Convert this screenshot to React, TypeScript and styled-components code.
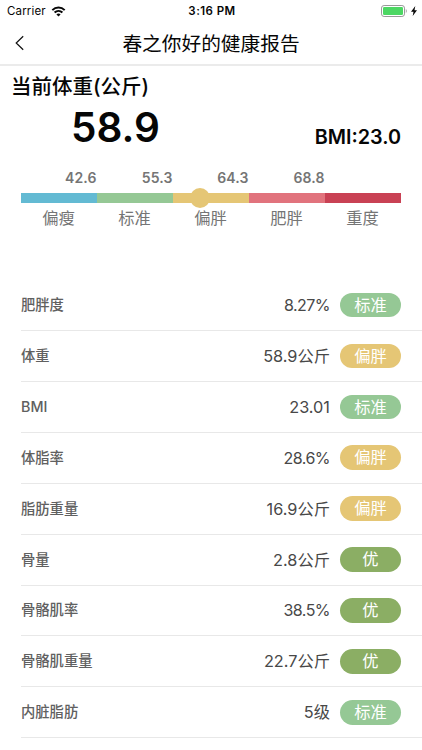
import React from 'react';
import styled, { createGlobalStyle } from 'styled-components';

const GlobalStyle = createGlobalStyle`
  * { box-sizing: border-box; }
  html, body { margin: 0; background: #fff; overflow: hidden; }
  body { font-family: Inter, "Noto Sans CJK SC", sans-serif; color: #060606; }
`;

const Screen = styled.main`
  display: flex;
  flex-direction: column;
  width: 422px;
  height: 750px;
  overflow: hidden;
  background: #fff;
`;

const StatusBar = styled.header`
  display: grid;
  grid-template-columns: 1fr auto 1fr;
  align-items: center;
  height: 22px;
  padding: 0 5px 0 7px;
  font-size: 11.5px;
  line-height: 22px;
`;

const Carrier = styled.div`
  display: flex;
  align-items: center;
  gap: 5px;
  letter-spacing: 0.15px;
`;

const Clock = styled.div`
  font-weight: 600;
  font-size: 11.5px;
  letter-spacing: 0.45px;
`;

const Power = styled.div`
  display: flex;
  justify-content: flex-end;
  align-items: center;
  gap: 4px;
`;

const NavBar = styled.nav`
  display: grid;
  grid-template-columns: 40px 1fr 40px;
  align-items: center;
  height: 44px;
  border-bottom: 2px solid #ebebeb;
`;

const BackButton = styled.button`
  display: flex;
  padding: 0 0 0 14px;
  border: 0;
  background: none;
  color: #111;
`;

const Title = styled.h1`
  margin: 0;
  padding-top: 1px;
  text-align: center;
  font-size: 19.7px;
  font-weight: 400;
  line-height: 40px;
`;

const Summary = styled.section`
  height: 100px;
  padding: 6px 21px 0 11px;
`;

const Heading = styled.h2`
  margin: 0;
  font-size: 20.5px;
  font-weight: 500;
  line-height: 30px;
`;

const Readings = styled.div`
  display: flex;
  justify-content: space-between;
  align-items: flex-end;
  height: 52px;
  padding-left: 60px;
`;

const Weight = styled.strong`
  font-size: 40.5px;
  font-weight: 600;
  line-height: 53px;
`;

const Bmi = styled.strong`
  font-size: 19.8px;
  font-weight: 600;
  line-height: 26px;
  margin-bottom: 4px;
`;

const Scale = styled.section`
  display: grid;
  grid-template-columns: repeat(5, 1fr);
  height: 114px;
  padding: 2px 21px 0;
`;

const Segment = styled.div`
  display: flex;
  flex-direction: column;
  align-items: center;
  color: #757575;
`;

const Limit = styled.span`
  align-self: flex-end;
  height: 25px;
  padding-right: 0.5px;
  font-size: 14px;
  font-weight: 600;
  line-height: 20px;
  letter-spacing: 0.1px;
`;

const Band = styled.div<{ $color: string }>`
  position: relative;
  width: 100%;
  height: 10px;
  background: ${p => p.$color};
`;

const Marker = styled.i`
  position: absolute;
  top: -5px;
  left: 17px;
  width: 20px;
  height: 20px;
  border-radius: 50%;
  background: #e5c675;
`;

const Range = styled.span`
  padding-right: 1px;
  font-size: 16.3px;
  font-weight: 400;
  line-height: 24px;
  margin-top: 3px;
`;

const Metrics = styled.ul`
  display: flex;
  flex-direction: column;
  margin: 0;
  padding: 0 0 0 21px;
  list-style: none;
`;

const Row = styled.li`
  display: flex;
  align-items: center;
  height: 50.93px;
  padding-right: 21px;
  border-bottom: 1px solid #e8e8e8;
`;

const Name = styled.span`
  flex: 1;
  color: #606060;
  font-size: 14.3px;
  font-weight: 500;
  line-height: 24px;
`;

const Value = styled.span<{ $percent: boolean }>`
  color: #484848;
  font-size: ${p => (p.$percent ? 16 : 16.3)}px;
  letter-spacing: ${p => (p.$percent ? -0.55 : 0)}px;
  line-height: 24px;
`;

const Pill = styled.span<{ $color: string }>`
  width: 61px;
  height: 24.5px;
  margin-left: 10px;
  border-radius: 13px;
  background: ${p => p.$color};
  color: #fff;
  text-align: center;
  font-size: 16.3px;
  line-height: 25px;
`;

const bands = [
  { name: '偏瘦', limit: '42.6', color: '#63bad3' },
  { name: '标准', limit: '55.3', color: '#95c895' },
  { name: '偏胖', limit: '64.3', color: '#e5c675', current: true },
  { name: '肥胖', limit: '68.8', color: '#e1737d' },
  { name: '重度', limit: '', color: '#c94154' },
];

const levels: Record<string, string> = { 标准: '#95c895', 偏胖: '#e5c675', 优: '#8bae64' };

const metrics = [
  ['肥胖度', '8.27%', '标准'],
  ['体重', '58.9公斤', '偏胖'],
  ['BMI', '23.01', '标准'],
  ['体脂率', '28.6%', '偏胖'],
  ['脂肪重量', '16.9公斤', '偏胖'],
  ['骨量', '2.8公斤', '优'],
  ['骨骼肌率', '38.5%', '优'],
  ['骨骼肌重量', '22.7公斤', '优'],
  ['内脏脂肪', '5级', '标准'],
];

const WifiIcon = () => (
  <svg width="15" height="11" viewBox="0 0 14 11" fill="none" stroke="#080808" strokeWidth="2">
    <path d="M.8 4.1C4.3.7 9.7.7 13.2 4.1M3.1 6.5c2.2-2.1 5.6-2.1 7.8 0" />
    <path d="M7 10.6 4.9 8.4c1.2-1.1 3-1.1 4.2 0Z" fill="#080808" stroke="none" />
  </svg>
);

const BatteryIcon = () => (
  <svg width="26" height="12" viewBox="0 0 26 12">
    <rect x=".5" y=".5" width="23" height="11" rx="2.6" fill="#fff" stroke="#999" />
    <rect x="2" y="2" width="20" height="8" rx="1.2" fill="#4cd763" />
    <path d="M24.8 4c1.3.8 1.3 3.2 0 4Z" fill="#999" />
  </svg>
);

const BoltIcon = () => (
  <svg width="6" height="10" viewBox="0 0 6 10">
    <path d="M4.3 0 0 5.7h2.5L1.7 10 6 4.2H3.5Z" fill="#080808" />
  </svg>
);

export default function App() {
  return (
    <>
      <GlobalStyle />
      <Screen>
        <StatusBar>
          <Carrier>Carrier <WifiIcon /></Carrier>
          <Clock>3:16 PM</Clock>
          <Power><BatteryIcon /><BoltIcon /></Power>
        </StatusBar>
        <NavBar>
          <BackButton aria-label="返回">
            <svg width="11" height="16" viewBox="0 0 11 16" fill="none" stroke="currentColor" strokeWidth="1.2">
              <path d="M9.2 1.2 2.2 8l7 6.8" />
            </svg>
          </BackButton>
          <Title>春之你好的健康报告</Title>
        </NavBar>
        <Summary>
          <Heading>当前体重(公斤)</Heading>
          <Readings>
            <Weight>58.9</Weight>
            <Bmi>BMI:23.0</Bmi>
          </Readings>
        </Summary>
        <Scale>
          {bands.map(band => (
            <Segment key={band.name}>
              <Limit>{band.limit}</Limit>
              <Band $color={band.color}>{band.current && <Marker />}</Band>
              <Range>{band.name}</Range>
            </Segment>
          ))}
        </Scale>
        <Metrics>
          {metrics.map(([name, value, level]) => (
            <Row key={name}>
              <Name>{name}</Name>
              <Value $percent={value.endsWith('%')}>{value}</Value>
              <Pill $color={levels[level]}>{level}</Pill>
            </Row>
          ))}
        </Metrics>
      </Screen>
    </>
  );
}
